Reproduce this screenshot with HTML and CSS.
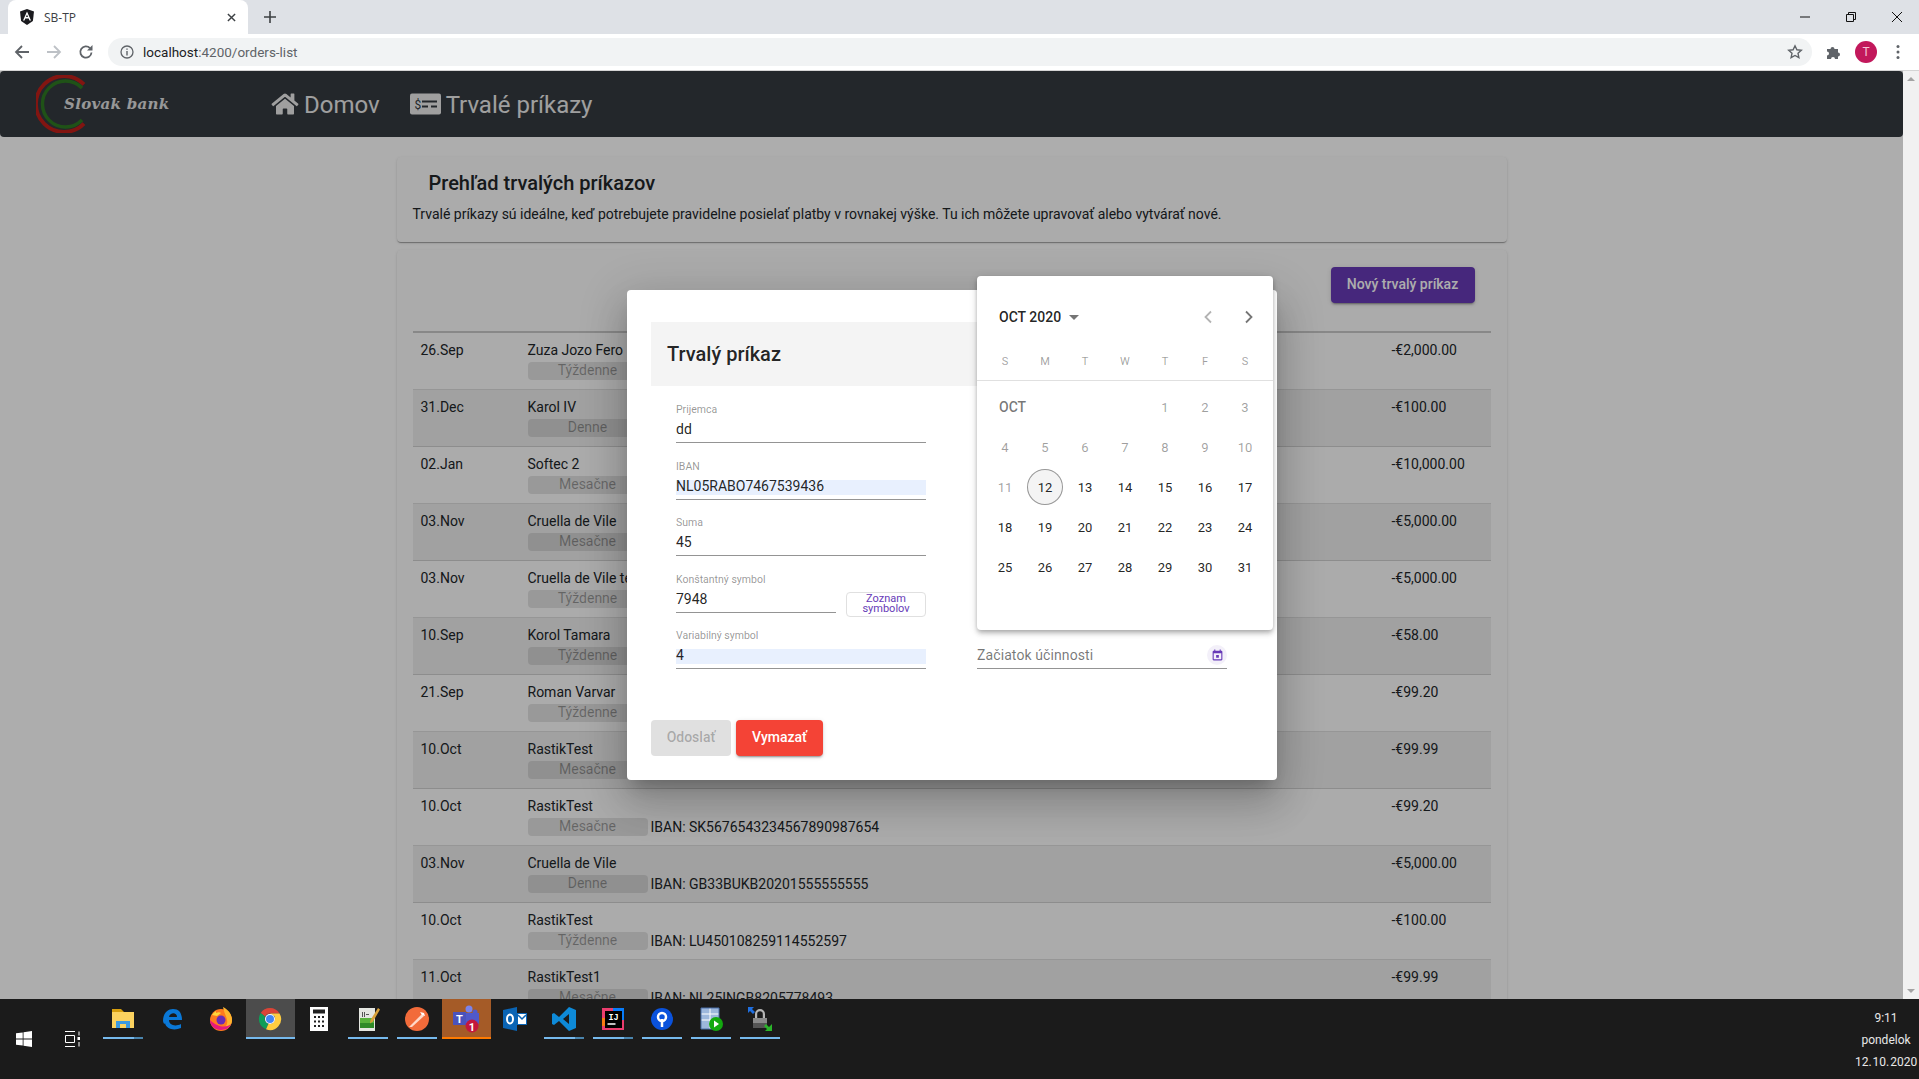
FILE: index.html
```html
<!DOCTYPE html>
<html lang="sk">
<head>
<meta charset="utf-8">
<title>SB-TP</title>
<link rel="stylesheet" href="styles.css">
</head>
<body>
<div class="tabstrip">
  <div class="tab">
    <svg class="favicon" viewBox="0 0 14 16"><path d="M7 0 0 2.500 1.100 12 7 16l5.900-4L14 2.500z" fill="#1b1b1f"/><path d="M7 2.500 3 11.500h1.500l.8-2h3.400l.8 2H11zM6 8l1-2.500L8 8z" fill="#fff"/></svg>
    <span class="tab-title">SB-TP</span>
    <svg class="tab-close" viewBox="0 0 10 10"><path d="M1 1l8 8M9 1l-8 8" stroke="#3c4043" stroke-width="1.600"/></svg>
  </div>
  <svg class="new-tab" viewBox="0 0 12 12"><path d="M6 0v12M0 6h12" stroke="#3c4043" stroke-width="1.600"/></svg>
  <div class="win-controls">
    <svg class="win-btn" viewBox="0 0 10 10"><path d="M0 5h10" stroke="#111" stroke-width="1"/></svg>
    <svg class="win-btn" viewBox="0 0 10 10"><path d="M.5 2.500h7v7h-7zM2.500 2.500v-2h7v7h-2" fill="none" stroke="#111" stroke-width="1"/></svg>
    <svg class="win-btn" viewBox="0 0 10 10"><path d="M0 0l10 10M10 0L0 10" stroke="#111" stroke-width="1"/></svg>
  </div>
</div>
<div class="toolbar">
  <svg class="tool first" viewBox="0 0 16 16"><path d="M15 8H2.500M8 2 2 8l6 6" fill="none" stroke="#5f6368" stroke-width="1.800"/></svg>
  <svg class="tool" viewBox="0 0 16 16"><path d="M1 8h12.500M8 2l6 6-6 6" fill="none" stroke="#bdc1c6" stroke-width="1.800"/></svg>
  <svg class="tool" viewBox="0 0 16 16"><path d="M13.500 8.500a5.600 5.600 0 1 1-1.500-4.300" fill="none" stroke="#5f6368" stroke-width="1.800"/><path d="M14.500 1v5.500H9z" fill="#5f6368"/></svg>
  <div class="urlbar">
    <svg class="info" viewBox="0 0 14 14"><circle cx="7" cy="7" r="6" fill="none" stroke="#5f6368" stroke-width="1.300"/><path d="M7 6v4.500M7 3.500v1.300" stroke="#5f6368" stroke-width="1.400"/></svg>
    <span class="url"><span class="host">localhost</span>:4200/orders-list</span>
    <svg class="star" viewBox="0 0 16 16"><path d="M8 1.800l1.900 4 4.400.5-3.300 3 .9 4.400L8 11.500l-3.900 2.200.9-4.400-3.300-3 4.400-.5z" fill="none" stroke="#5f6368" stroke-width="1.400"/></svg>
  </div>
  <svg class="puzzle" viewBox="0 0 16 16"><path d="M1 5h3.500a2 2 0 1 1 4 0H12v3.500a2 2 0 1 1 0 4V15H9a2 2 0 1 0-4 0H1v-3.500a2 2 0 1 0 0-4z" fill="#5f6368"/></svg>
  <div class="avatar">T</div>
  <svg class="kebab" viewBox="0 0 4 16"><circle cx="2" cy="2.500" r="1.500" fill="#5f6368"/><circle cx="2" cy="8" r="1.500" fill="#5f6368"/><circle cx="2" cy="13.500" r="1.500" fill="#5f6368"/></svg>
</div>

<div class="viewport">
  <div class="page">
    <nav class="navbar">
      <div class="brand">
        <svg class="brand-mark" viewBox="0 0 52 58"><path d="M48 9.400A28 28 0 1 0 48 48.600" fill="none" stroke="#c01f1a" stroke-width="3.800"/><path d="M46 13A23 23 0 1 0 46 45" fill="none" stroke="#2f7a22" stroke-width="3.400"/></svg>
        <span class="brand-name">Slovak bank</span>
      </div>
      <a class="nav-link">
        <svg class="nav-home" viewBox="0 0 576 512"><path fill="currentColor" d="M280.370 148.260L96 300.110V464a16 16 0 0 0 16 16l112.060-.29a16 16 0 0 0 15.920-16V368a16 16 0 0 1 16-16h64a16 16 0 0 1 16 16v95.640a16 16 0 0 0 16 16.050L464 480a16 16 0 0 0 16-16V300L295.670 148.260a12.190 12.190 0 0 0-15.300 0zM571.600 251.470L488 182.560V44.050a12 12 0 0 0-12-12h-56a12 12 0 0 0-12 12v72.610L318.470 43a48 48 0 0 0-61 0L4.340 251.470a12 12 0 0 0-1.600 16.900l25.500 31A12 12 0 0 0 45.150 301l235.220-193.740a12.190 12.190 0 0 1 15.300 0L530.900 301a12 12 0 0 0 16.900-1.600l25.500-31a12 12 0 0 0-1.700-16.930z"/></svg>
        <span class="nav-text">Domov</span>
      </a>
      <a class="nav-link">
        <svg class="nav-bill" viewBox="0 0 31 22"><rect width="31" height="21" y="0.500" rx="2" fill="currentColor"/><text x="4.500" y="15.500" class="bill-sign">$</text><path d="M12 8.500h15M12 13.500h6M21 13.500h6" stroke="#343a40" stroke-width="1.800"/></svg>
        <span class="nav-text">Trvalé príkazy</span>
      </a>
    </nav>
    <main class="main">
      <section class="card intro">
        <h1 class="intro-title">Prehľad trvalých príkazov</h1>
        <p class="intro-text">Trvalé príkazy sú ideálne, keď potrebujete pravidelne posielať platby v rovnakej výške. Tu ich môžete upravovať alebo vytvárať nové.</p>
      </section>
      <section class="card orders">
        <div class="orders-top"><button class="btn-new">Nový trvalý príkaz</button></div>
        <div class="rows">
          <div class="row"><div class="r-date">26.Sep</div><div class="r-mid"><div>Zuza Jozo Fero</div><div class="r-sub"><span class="badge">Týždenne</span></div></div><div class="r-amt">-€2,000.00</div></div>
          <div class="row"><div class="r-date">31.Dec</div><div class="r-mid"><div>Karol IV</div><div class="r-sub"><span class="badge">Denne</span></div></div><div class="r-amt">-€100.00</div></div>
          <div class="row"><div class="r-date">02.Jan</div><div class="r-mid"><div>Softec 2</div><div class="r-sub"><span class="badge">Mesačne</span></div></div><div class="r-amt">-€10,000.00</div></div>
          <div class="row"><div class="r-date">03.Nov</div><div class="r-mid"><div>Cruella de Vile</div><div class="r-sub"><span class="badge">Mesačne</span></div></div><div class="r-amt">-€5,000.00</div></div>
          <div class="row"><div class="r-date">03.Nov</div><div class="r-mid"><div>Cruella de Vile test</div><div class="r-sub"><span class="badge">Týždenne</span></div></div><div class="r-amt">-€5,000.00</div></div>
          <div class="row"><div class="r-date">10.Sep</div><div class="r-mid"><div>Korol Tamara</div><div class="r-sub"><span class="badge">Týždenne</span></div></div><div class="r-amt">-€58.00</div></div>
          <div class="row"><div class="r-date">21.Sep</div><div class="r-mid"><div>Roman Varvar</div><div class="r-sub"><span class="badge">Týždenne</span></div></div><div class="r-amt">-€99.20</div></div>
          <div class="row"><div class="r-date">10.Oct</div><div class="r-mid"><div>RastikTest</div><div class="r-sub"><span class="badge">Mesačne</span></div></div><div class="r-amt">-€99.99</div></div>
          <div class="row"><div class="r-date">10.Oct</div><div class="r-mid"><div>RastikTest</div><div class="r-sub"><span class="badge">Mesačne</span><span>IBAN: SK5676543234567890987654</span></div></div><div class="r-amt">-€99.20</div></div>
          <div class="row"><div class="r-date">03.Nov</div><div class="r-mid"><div>Cruella de Vile</div><div class="r-sub"><span class="badge">Denne</span><span>IBAN: GB33BUKB20201555555555</span></div></div><div class="r-amt">-€5,000.00</div></div>
          <div class="row"><div class="r-date">10.Oct</div><div class="r-mid"><div>RastikTest</div><div class="r-sub"><span class="badge">Týždenne</span><span>IBAN: LU450108259114552597</span></div></div><div class="r-amt">-€100.00</div></div>
          <div class="row"><div class="r-date">11.Oct</div><div class="r-mid"><div>RastikTest1</div><div class="r-sub"><span class="badge">Mesačne</span><span>IBAN: NL25INGB8205778493</span></div></div><div class="r-amt">-€99.99</div></div>
        </div>
      </section>
    </main>

    <div class="overlay">
      <div class="dialog">
        <h2 class="dialog-title">Trvalý príkaz</h2>
        <div class="form">
          <div class="form-left">
            <div class="field"><label class="f-label">Prijemca</label><div class="f-value">dd</div></div>
            <div class="field"><label class="f-label">IBAN</label><div class="f-value autofill">NL05RABO7467539436</div></div>
            <div class="field"><label class="f-label">Suma</label><div class="f-value">45</div></div>
            <div class="field-pair">
              <div class="field short"><label class="f-label">Konštantný symbol</label><div class="f-value">7948</div></div>
              <button class="btn-symbols">Zoznam symbolov</button>
            </div>
            <div class="field"><label class="f-label">Variabilný symbol</label><div class="f-value autofill">4</div></div>
          </div>
          <div class="form-right">
            <div class="date-field">
              <span class="date-placeholder">Začiatok účinnosti</span>
              <span class="date-toggle"><svg viewBox="0 0 24 24"><path fill="#673ab7" d="M19 3h-1V1h-2v2H8V1H6v2H5c-1.110 0-1.990.9-1.990 2L3 19c0 1.100.89 2 2 2h14c1.100 0 2-.9 2-2V5c0-1.100-.9-2-2-2zm0 16H5V8h14v11zM9.500 11h5v5h-5z"/></svg></span>
            </div>
          </div>
        </div>
        <div class="actions">
          <button class="btn-send">Odoslať</button>
          <button class="btn-delete">Vymazať</button>
        </div>
      </div>

      <div class="calendar">
        <div class="cal-head">
          <span class="cal-period">OCT 2020</span>
          <span class="cal-caret"></span>
          <svg class="cal-prev" viewBox="0 0 10 14"><path d="M8 1.500 2.500 7 8 12.500" fill="none" stroke="#b3b3b3" stroke-width="1.800"/></svg>
          <svg class="cal-next" viewBox="0 0 10 14"><path d="M2 1.500 7.500 7 2 12.500" fill="none" stroke="#757575" stroke-width="1.800"/></svg>
        </div>
        <div class="cal-week"><span>S</span><span>M</span><span>T</span><span>W</span><span>T</span><span>F</span><span>S</span></div>
        <div class="cal-grid">
          <span class="cal-month">OCT</span>
          <span class="off">1</span><span class="off">2</span><span class="off">3</span>
          <span class="off">4</span><span class="off">5</span><span class="off">6</span><span class="off">7</span><span class="off">8</span><span class="off">9</span><span class="off">10</span>
          <span class="off">11</span><span class="today-cell"><b class="today">12</b></span><span>13</span><span>14</span><span>15</span><span>16</span><span>17</span>
          <span>18</span><span>19</span><span>20</span><span>21</span><span>22</span><span>23</span><span>24</span>
          <span>25</span><span>26</span><span>27</span><span>28</span><span>29</span><span>30</span><span>31</span>
        </div>
      </div>
    </div>
  </div>
  <div class="scrollbar"><span class="sb-up"></span><span class="sb-down"></span></div>
</div>

<footer class="taskbar">
  <div class="sys">
    <svg class="sys-icon" viewBox="0 0 16 16"><path fill="#fff" d="M0 2.300 6.700 1.400v6.200H0zM7.500 1.300 16 0v7.600H7.500zM0 8.400h6.700v6.200L0 13.700zM7.500 8.400H16V16l-8.500-1.200z"/></svg>
    <svg class="sys-icon" viewBox="0 0 16 16"><path d="M1 .5h10M1 15.500h10M1.500 4.500h9v7h-9zM15 .5v4M15 11v4.500" fill="none" stroke="#fff" stroke-width="1"/><rect x="13.500" y="6" width="3" height="3" fill="#fff"/></svg>
  </div>
  <div class="apps">
    <div class="app multi"><svg viewBox="0 0 24 24"><path d="M1 2h9l3 3H1z" fill="#d69e0e"/><path d="M1 5h22v16H1z" fill="#fbd25f"/><path d="M5 21v-7h14v7h-4v-4H9v4z" fill="#3b9ae1"/></svg></div>
    <div class="app none"><svg viewBox="0 0 24 24"><path d="M3 14C3 6 8 2 13 2c6 0 9 4 9 11H9c0 5 6 7 12 4v4c-7 3-15 1-16-5-.2 1-1 2-2-2zM9 10h8c0-5-7-5-8 0z" fill="#0a78d7"/></svg></div>
    <div class="app none"><svg viewBox="0 0 24 24"><circle cx="12" cy="13" r="11" fill="#ff7a1f"/><path d="M14 0c6 3 9 8 9 13 0 6-5 10-11 10 5-2 7-6 6-10-.5-4-3-7-4-13z" fill="#ffb52e"/><path d="M1 13c0 6 5 10 11 10s9-3 10-6c-3 3-12 5-21-4z" fill="#e6197e"/><circle cx="12" cy="13" r="4.500" fill="#6a2bb5"/><path d="M3 8c1-2 3-3 4-4v2c2-1 4-1 5 0L8 9z" fill="#ffd73c"/></svg></div>
    <div class="app active"><svg viewBox="0 0 24 24"><path d="M12 1a11 11 0 0 1 9.500 5.500H12a5.500 5.500 0 0 0-5 3L2.700 6A11 11 0 0 1 12 1z" fill="#db4437"/><path d="M2.700 6 7 9.500a5.500 5.500 0 0 0 3.500 7.300L8 22.300A11 11 0 0 1 2.700 6z" fill="#0f9d58"/><path d="M21.500 6.500A11 11 0 0 1 8 22.300l2.500-5.500A5.500 5.500 0 0 0 16.500 9l-4.500-2.500z" fill="#ffcd40"/><circle cx="12" cy="12" r="5" fill="#fff"/><circle cx="12" cy="12" r="4" fill="#4285f4"/></svg></div>
    <div class="app none"><svg viewBox="0 0 24 24"><path d="M3 0h18v24H3z" fill="#fff"/><path d="M6 2.500h12v4H6zM7 9h2v2H7zM11 9h2v2h-2zM15 9h2v2h-2zM7 13.500h2v2H7zM11 13.500h2v2h-2zM15 13.500h2v2h-2zM7 18h2v2H7zM11 18h2v2h-2zM15 18h2v2h-2z" fill="#222"/></svg></div>
    <div class="app"><svg viewBox="0 0 24 24"><path d="M3 1h16v23H3z" fill="#e4e6e1"/><path d="M4 11h14v10H4z" fill="#58b23c"/><path d="M4 16h14v5H4z" fill="#2f8a28"/><path d="M6 5h1v5H6zM8 5h1v5H8zM10 7h3v1h-3z" fill="#555"/><path d="M22 1l2 1.500-7 12-3 2 .5-3.500z" fill="#d9a13a"/></svg></div>
    <div class="app"><svg viewBox="0 0 24 24"><circle cx="12" cy="12" r="12" fill="#f26b3a"/><path d="M4 20 17 7l2 2L7 20z" fill="#ffd9c9"/><path d="M15 5l4 1 1 3-3-1z" fill="#fff"/></svg></div>
    <div class="app alert"><svg viewBox="0 0 28 28"><circle cx="17" cy="4" r="3.500" fill="#7b83eb"/><circle cx="23" cy="7" r="2.500" fill="#5059c9"/><path d="M13 8h14v9a5 5 0 0 1-5 5h-5a4 4 0 0 1-4-4z" fill="#5059c9"/><path d="M1 7h13v13H1z" fill="#4b53bc"/><text x="7.500" y="17.500" class="teams-t">T</text><circle cx="20" cy="21" r="6.500" fill="#c4173c"/><text x="20" y="25.500" class="teams-n">1</text></svg></div>
    <div class="app none"><svg viewBox="0 0 24 24"><path d="M0 3 14 0v24L0 21z" fill="#0a64b4"/><ellipse cx="7" cy="12" rx="3" ry="4.500" fill="none" stroke="#fff" stroke-width="2"/><path d="M14 6h10v12H14z" fill="#0a64b4"/><path d="M15 7h8v10h-8z" fill="#fff"/><path d="M15 8l4 4 4-4" fill="none" stroke="#0a64b4" stroke-width="1.500"/></svg></div>
    <div class="app multi"><svg viewBox="0 0 24 24"><path d="M17 0l7 3v18l-7 3-10-10-5 4-2-1V7l2-1 5 4zM17 7l-6 5 6 5z" fill="#0e8ad8"/></svg></div>
    <div class="app multi"><svg viewBox="0 0 24 24"><path d="M1 1h22v22H1z" fill="#ea3d6e"/><path d="M12 1h11v12H12z" fill="#087cfa"/><path d="M1 11h3v8H1z" fill="#f97a12"/><path d="M4 4h17v17H4z" fill="#000"/><text x="12.500" y="13" class="ij">IJ</text><path d="M6.500 17h8" stroke="#fff" stroke-width="1.500"/></svg></div>
    <div class="app"><svg viewBox="0 0 24 24"><circle cx="12" cy="12" r="11" fill="#0a52dc"/><circle cx="12" cy="10" r="4" fill="none" stroke="#fff" stroke-width="2.500"/><path d="M12 12v8" stroke="#fff" stroke-width="2.500"/></svg></div>
    <div class="app"><svg viewBox="0 0 24 24"><path d="M2 1h18v21H2z" fill="#9db7dc"/><path d="M2 7h18M2 13h18M11 1v21" stroke="#fff" stroke-width="1"/><path d="M2 1h18v21H2z" fill="none" stroke="#4b6ea8"/><circle cx="17" cy="17" r="7" fill="#13a90f"/><path d="M15 13.500v7l5-3.500z" fill="#fff"/></svg></div>
    <div class="app"><svg viewBox="0 0 24 24"><path d="M0 0h6l-2 2 3 3-2 2-3-3-2 2z" fill="#1f6fe0"/><path d="M7 12V7a5 5 0 0 1 10 0v5h-2.200V7a2.800 2.800 0 0 0-5.600 0v5z" fill="#b5b5b5"/><path d="M5 11h14v10H5z" fill="#8a8a8a"/><path d="M5 16h14v5H5z" fill="#555"/><path d="M24 24h-7l2-2-3-3 2-2 3 3 3-3z" fill="#2ab52a"/></svg></div>
  </div>
  <div class="clock"><span>9:11</span><span>pondelok</span><span>12. 10. 2020</span></div>
</footer>
</body>
</html>
```
FILE: styles.css
```css
* { box-sizing: border-box; }
html, body { margin: 0; height: 1079px; overflow: hidden; }
body {
  width: 1919px;
  display: flex;
  flex-direction: column;
  font-family: Roboto, "Liberation Sans", sans-serif;
  font-size: 14px;
  color: #212529;
  background: #fff;
}

/* browser chrome */
.tabstrip { height: 34px; background: #dee1e6; display: flex; align-items: flex-end; flex: none; }
.tab {
  width: 240px; height: 34px; margin-left: 8px; background: #fff;
  border-radius: 8px 8px 0 0; display: flex; align-items: center; padding: 0 12px;
}
.favicon { width: 14px; height: 16px; }
.tab-title { margin-left: 10px; font-size: 12px; color: #3c4043; font-family: "Open Sans", sans-serif; flex: 1; }
.tab-close { width: 9px; height: 9px; }
.new-tab { width: 12px; height: 12px; margin: 0 0 11px 16px; }
.win-controls { margin-left: auto; align-self: stretch; display: flex; align-items: center; gap: 36px; padding-right: 17px; }
.win-btn { width: 10px; height: 10px; }

.toolbar {
  height: 37px; flex: none; background: #fff; border-bottom: 1px solid #d4d4d4;
  display: flex; align-items: center; padding: 0 0 1px 14px;
}
.tool { width: 16px; height: 16px; margin-right: 16px; }
.urlbar {
  width: 1704px; height: 28px; margin-left: -2px; border-radius: 14px; background: #f1f3f4;
  display: flex; align-items: center; padding: 0 9px 0 12px;
}
.info { width: 14px; height: 14px; }
.url { margin-left: 9px; font-size: 13.500px; color: #5f6368; flex: 1; }
.host { color: #202124; }
.star { width: 16px; height: 16px; }
.puzzle { width: 16px; height: 16px; margin-left: 14px; }
.avatar {
  width: 22px; height: 22px; margin-left: 13px; border-radius: 50%; background: #c2185b;
  color: #f7c6d9; font-size: 12px; display: flex; align-items: center; justify-content: center;
}
.kebab { width: 4px; height: 16px; margin-left: 19px; }

/* viewport */
.viewport { height: 928px; flex: none; display: flex; }
.page { flex: 1; position: relative; overflow: hidden; background: #fff; }
.scrollbar { width: 16px; background: #f1f1f1; display: flex; flex-direction: column; justify-content: space-between; align-items: center; padding: 6px 0; }
.sb-up { width: 0; height: 0; border: 4px solid transparent; border-top: 0; border-bottom: 4px solid #a3a3a3; }
.sb-down { width: 0; height: 0; border: 4px solid transparent; border-bottom: 0; border-top: 4px solid #a3a3a3; }

.navbar { height: 66px; background: #343a40; border-radius: 4px; display: flex; align-items: center; padding-left: 36px; color: #ebebeb; }
.brand { width: 235px; display: flex; align-items: center; }
.brand-mark { width: 52px; height: 58px; }
.brand-name {
  margin-left: -24px; font-family: "DejaVu Serif", serif; font-style: italic; font-weight: 700;
  font-size: 15px; letter-spacing: .3px; color: #e0e0e0;
}
.nav-link { display: flex; align-items: center; font-size: 24px; margin-right: 30px; gap: 5px; }
.nav-text { padding-top: 2px; }
.nav-home { width: 28px; height: 24px; }
.nav-bill { width: 31px; height: 22px; }
.bill-sign { font-size: 12px; font-family: Roboto, sans-serif; fill: #343a40; }

.main { width: 1110px; margin: 20px auto 0; }
.card { background: #fcfcfc; border-radius: 4px; box-shadow: 0 2px 1px -1px rgba(0,0,0,.2), 0 1px 1px 0 rgba(0,0,0,.14), 0 1px 3px 0 rgba(0,0,0,.12); }
.intro { height: 85px; padding: 14px 16px 0; margin-bottom: 8px; }
.intro-title { margin: 0 0 0 16px; font-size: 20px; line-height: 24px; font-weight: 500; }
.intro-text { margin: 9px 0 0; line-height: 21px; }
.orders { padding: 17px 16px 0; }
.orders-top { display: flex; justify-content: flex-end; padding-right: 16px; height: 64px; }
.btn-new {
  width: 144px; height: 36px; padding: 0 0 2px; border: 0; border-radius: 4px; background: #673ab7; color: #fff;
  font: 500 14px Roboto, sans-serif; box-shadow: 0 3px 1px -2px rgba(0,0,0,.2), 0 2px 2px 0 rgba(0,0,0,.14), 0 1px 5px 0 rgba(0,0,0,.12);
}
.rows { border-top: 2px solid rgba(0,0,0,.2); }
.row { height: 57px; padding-top: 7px; border-bottom: 1px solid rgba(0,0,0,.12); display: flex; line-height: 20px; }
.row:nth-child(even) { background: rgba(0,0,0,.06); }
.r-date { width: 115px; padding-left: 8px; }
.r-mid { flex: 1; }
.r-sub { display: flex; gap: 3px; margin-top: 2px; height: 18px; align-items: center; }
.r-amt { width: 99px; }
.badge {
  width: 120px; height: 18px; line-height: 16px; text-align: center; border-radius: 4px;
  background: rgba(0,0,0,.1); color: rgba(0,0,0,.34);
}

/* overlay & dialog */
.overlay { position: absolute; inset: 0; background: rgba(0,0,0,.32); }
.dialog {
  position: absolute; left: 627px; top: 219px; width: 650px; height: 490px; padding: 32px 24px 24px;
  background: #fff; border-radius: 4px; display: flex; flex-direction: column;
  box-shadow: 0 11px 15px -7px rgba(0,0,0,.2), 0 24px 38px 3px rgba(0,0,0,.14), 0 9px 46px 8px rgba(0,0,0,.12);
}
.dialog-title { margin: 0; height: 64px; line-height: 64px; padding-left: 16px; background: #f4f4f4; font-size: 20px; font-weight: 500; color: rgba(0,0,0,.87); }
.form { display: grid; grid-template-columns: 250px 250px; column-gap: 51px; padding-left: 25px; margin-top: 18px; }
.form-left { display: flex; flex-direction: column; gap: 17.500px; }
.form-right { display: flex; align-items: flex-end; }
.field { display: block; height: 39px; border-bottom: 1px solid rgba(0,0,0,.42); }
.field-pair { display: flex; justify-content: space-between; align-items: flex-start; height: 39px; }
.short { width: 160px; }
.f-label { display: block; height: 12px; font-size: 10.500px; line-height: 12px; color: rgba(0,0,0,.42); margin-bottom: 7px; }
.f-value { height: 15px; line-height: 13px; color: rgba(0,0,0,.87); }
.autofill { background: #e8f0fe; }
.btn-symbols {
  width: 80px; height: 25px; margin-top: 18px; padding: 0 8px; border: 1px solid #e0e0e0; border-radius: 4px;
  background: #fff; color: #673ab7; font: 400 11px/10px Roboto, sans-serif; flex: none;
}
.date-field { width: 250px; height: 27px; border-bottom: 1px solid rgba(0,0,0,.42); display: flex; justify-content: space-between; align-items: center; }
.date-placeholder { color: rgba(0,0,0,.54); letter-spacing: .1px; }
.date-toggle { width: 20px; height: 20px; border-radius: 50%; background: rgba(103,58,183,.08); display: flex; align-items: center; justify-content: center; }
.date-toggle svg { width: 13px; height: 13px; }
.actions { margin-top: auto; display: flex; gap: 5px; }
.btn-send, .btn-delete { height: 36px; padding: 0 0 2px; border: 0; border-radius: 4px; font: 500 14px Roboto, sans-serif; }
.btn-send { width: 80px; background: #e0e0e0; color: rgba(0,0,0,.26); }
.btn-delete { width: 87px; background: #f44336; color: #fff; box-shadow: 0 3px 1px -2px rgba(0,0,0,.2), 0 2px 2px 0 rgba(0,0,0,.14), 0 1px 5px 0 rgba(0,0,0,.12); }

/* calendar */
.calendar {
  position: absolute; left: 977px; top: 205px; width: 296px; height: 354px; background: #fff; border-radius: 4px;
  box-shadow: 0 2px 4px -1px rgba(0,0,0,.2), 0 4px 5px 0 rgba(0,0,0,.14), 0 1px 10px 0 rgba(0,0,0,.12);
}
.cal-head { height: 75px; padding: 7px 19px 0 22px; display: flex; align-items: center; }
.cal-period { font-size: 14px; font-weight: 500; color: rgba(0,0,0,.87); }
.cal-caret { width: 0; height: 0; margin-left: 8px; border: 5px solid transparent; border-top: 5px solid rgba(0,0,0,.54); border-bottom: 0; }
.cal-prev, .cal-next { width: 10px; height: 14px; }
.cal-prev { margin-left: auto; margin-right: 31px; }
.cal-week { height: 30px; padding: 0 8px 8px; display: grid; grid-template-columns: repeat(7, 40px); align-items: center; border-bottom: 1px solid #e0e0e0; text-align: center; font-size: 11px; color: rgba(0,0,0,.38); }
.cal-grid { padding: 6px 8px 0; display: grid; grid-template-columns: repeat(7, 40px); grid-auto-rows: 40px; font-size: 13px; color: rgba(0,0,0,.87); }
.cal-grid > span { display: flex; align-items: center; justify-content: center; }
.cal-grid > .cal-month { grid-column: span 4; justify-content: flex-start; padding-left: 14px; font-size: 14px; font-weight: 500; color: rgba(0,0,0,.54); }
.cal-grid > .off { color: rgba(0,0,0,.38); }
.today { width: 36px; height: 36px; border: 1px solid rgba(0,0,0,.38); border-radius: 50%; background: #f4f4f4; font-weight: 400; display: flex; align-items: center; justify-content: center; }

/* taskbar */
.taskbar { height: 80px; flex: none; background: #1b1b1b; display: flex; }
.sys { width: 98.500px; display: flex; align-items: center; padding-left: 16px; gap: 32px; }
.sys-icon { width: 16px; height: 16px; }
.apps { display: flex; height: 40px; }
.app { width: 49px; height: 40px; position: relative; display: flex; align-items: center; justify-content: center; }
.app svg { width: 24px; height: 24px; }
.app::after { content: ""; position: absolute; left: 4.500px; right: 4.500px; bottom: 0; height: 2px; background: #76b9ed; }
.app.none::after { display: none; }
.app.multi::after { background: linear-gradient(90deg, #76b9ed 78%, #4a84ad 78%); }
.app.active { background: #4c4c4c; }
.app.active::after { left: 0; right: 0; }
.app.alert { background: #a55b27; }
.app.alert svg { width: 28px; height: 28px; }
.app.alert::after { left: 0; right: 0; background: #ff7a00; }
.teams-t { font: 700 11px Roboto, sans-serif; fill: #fff; text-anchor: middle; }
.teams-n { font: 700 11px Roboto, sans-serif; fill: #fff; text-anchor: middle; }
.ij { font: 700 8.500px "Liberation Mono", monospace; fill: #fff; text-anchor: middle; }
.clock {
  margin-left: auto; width: 62px; margin-right: 2px; padding-top: 10px;
  display: flex; flex-direction: column; align-items: center; gap: 4px; color: #e8e8e8; font: 12px/18px Roboto, sans-serif; word-spacing: -2px;
}
.clock span { white-space: nowrap; }
```
